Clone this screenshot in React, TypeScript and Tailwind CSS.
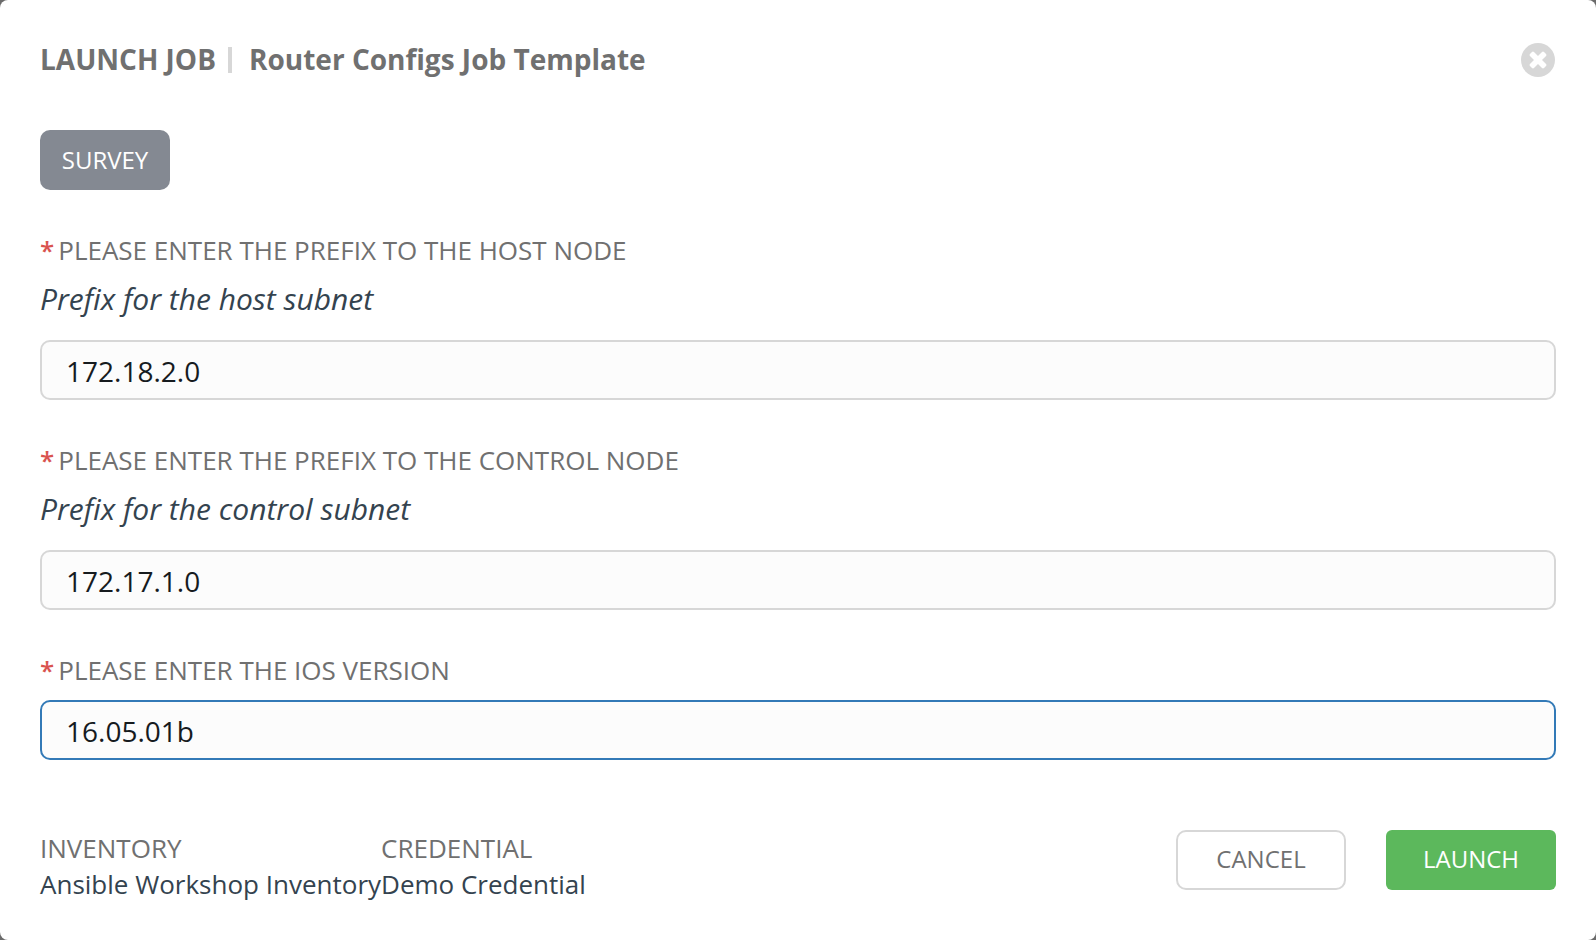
import { useState } from 'react';

type SurveyField = {
  id: string;
  label: string;
  hint?: string;
  value: string;
  active?: boolean;
};

const fields: SurveyField[] = [
  {
    id: 'host-prefix',
    label: 'PLEASE ENTER THE PREFIX TO THE HOST NODE',
    hint: 'Prefix for the host subnet',
    value: '172.18.2.0',
  },
  {
    id: 'control-prefix',
    label: 'PLEASE ENTER THE PREFIX TO THE CONTROL NODE',
    hint: 'Prefix for the control subnet',
    value: '172.17.1.0',
  },
  {
    id: 'ios-version',
    label: 'PLEASE ENTER THE IOS VERSION',
    value: '16.05.01b',
    active: true,
  },
];

const summary = [
  { term: 'INVENTORY', detail: 'Ansible Workshop Inventory' },
  { term: 'CREDENTIAL', detail: 'Demo Credential' },
];

function CloseIcon() {
  return (
    <svg viewBox="0 128 1536 1536" className="size-[34px]" aria-hidden="true">
      <circle cx="768" cy="896" r="768" fill="#d7d7d7" />
      <path
        fill="#ffffff"
        d="M1149 1122q0-26-19-45l-181-181 181-181q19-19 19-45 0-27-19-46l-90-90q-19-18-46-18-26 0-45 18l-181 181-181-181q-19-18-45-18-27 0-46 18l-90 90q-19 19-19 46 0 26 19 45l181 181-181 181q-19 19-19 45 0 27 19 46l90 90q19 18 46 18 26 0 45-18l181-181 181 181q19 18 45 18 27 0 46-18l90-90q19-19 19-46z"
      />
    </svg>
  );
}

function Field({ field }: { field: SurveyField }) {
  const [value, setValue] = useState(field.value);
  const hintId = field.hint ? `${field.id}-hint` : undefined;
  return (
    <div className="flex flex-col gap-3">
      <label htmlFor={field.id} className="flex gap-1 text-[26px] leading-9 text-[#707070]">
        <span className="font-semibold text-[#d9534f]">*</span>
        {field.label}
      </label>
      {field.hint && (
        <p id={hintId} className="pb-2.5 text-3xl leading-[38px] text-[#34434f] italic">
          {field.hint}
        </p>
      )}
      <input
        id={field.id}
        type="text"
        value={value}
        aria-describedby={hintId}
        onChange={(event) => setValue(event.target.value)}
        className={`h-15 w-full rounded-[10px] border-2 bg-[#fcfcfc] px-6 pt-0.5 text-[28px] text-[#161b1f] outline-none focus:border-[#337ab7] ${
          field.active ? 'border-[#337ab7]' : 'border-[#d7d7d7]'
        }`}
      />
    </div>
  );
}

export default function App() {
  return (
    <div className="min-h-screen bg-[#6b6b6b] font-['Open_Sans',sans-serif]">
      <main className="flex min-h-screen flex-col rounded-lg bg-white px-10 pt-10 pb-9">
        <header className="flex h-10 items-center justify-between">
          <h1 className="flex items-center pb-0.5 text-[28px] leading-[38px] font-bold text-[#707070]">
            <span>LAUNCH JOB</span>
            <span className="mt-0.5 mr-[17px] ml-3 h-[26px] w-1 bg-[#d7d7d7]" />
            <span>Router Configs Job Template</span>
          </h1>
          <button type="button" aria-label="Close" className="pr-px">
            <CloseIcon />
          </button>
        </header>

        <div className="mt-[50px]">
          <button
            type="button"
            className="h-15 w-[130px] rounded-[10px] bg-[#848992] text-2xl text-white"
          >
            SURVEY
          </button>
        </div>

        <form className="mt-[42px] flex flex-col gap-[42px]">
          {fields.map((field) => (
            <Field key={field.id} field={field} />
          ))}
        </form>

        <footer className="mt-[70px] flex items-start justify-between">
          <dl className="flex text-[26px] leading-9">
            {summary.map((item) => (
              <div key={item.term}>
                <dt className="text-[#707070]">{item.term}</dt>
                <dd className="text-[#34434f]">{item.detail}</dd>
              </div>
            ))}
          </dl>
          <div className="flex gap-10 text-2xl">
            <button
              type="button"
              className="h-15 w-[170px] rounded-[10px] border-2 border-[#d7d7d7] bg-white pb-0.5 text-[#707070]"
            >
              CANCEL
            </button>
            <button
              type="button"
              className="h-15 w-[170px] rounded-md bg-[#5cb85c] pb-0.5 text-white"
            >
              LAUNCH
            </button>
          </div>
        </footer>
      </main>
    </div>
  );
}
